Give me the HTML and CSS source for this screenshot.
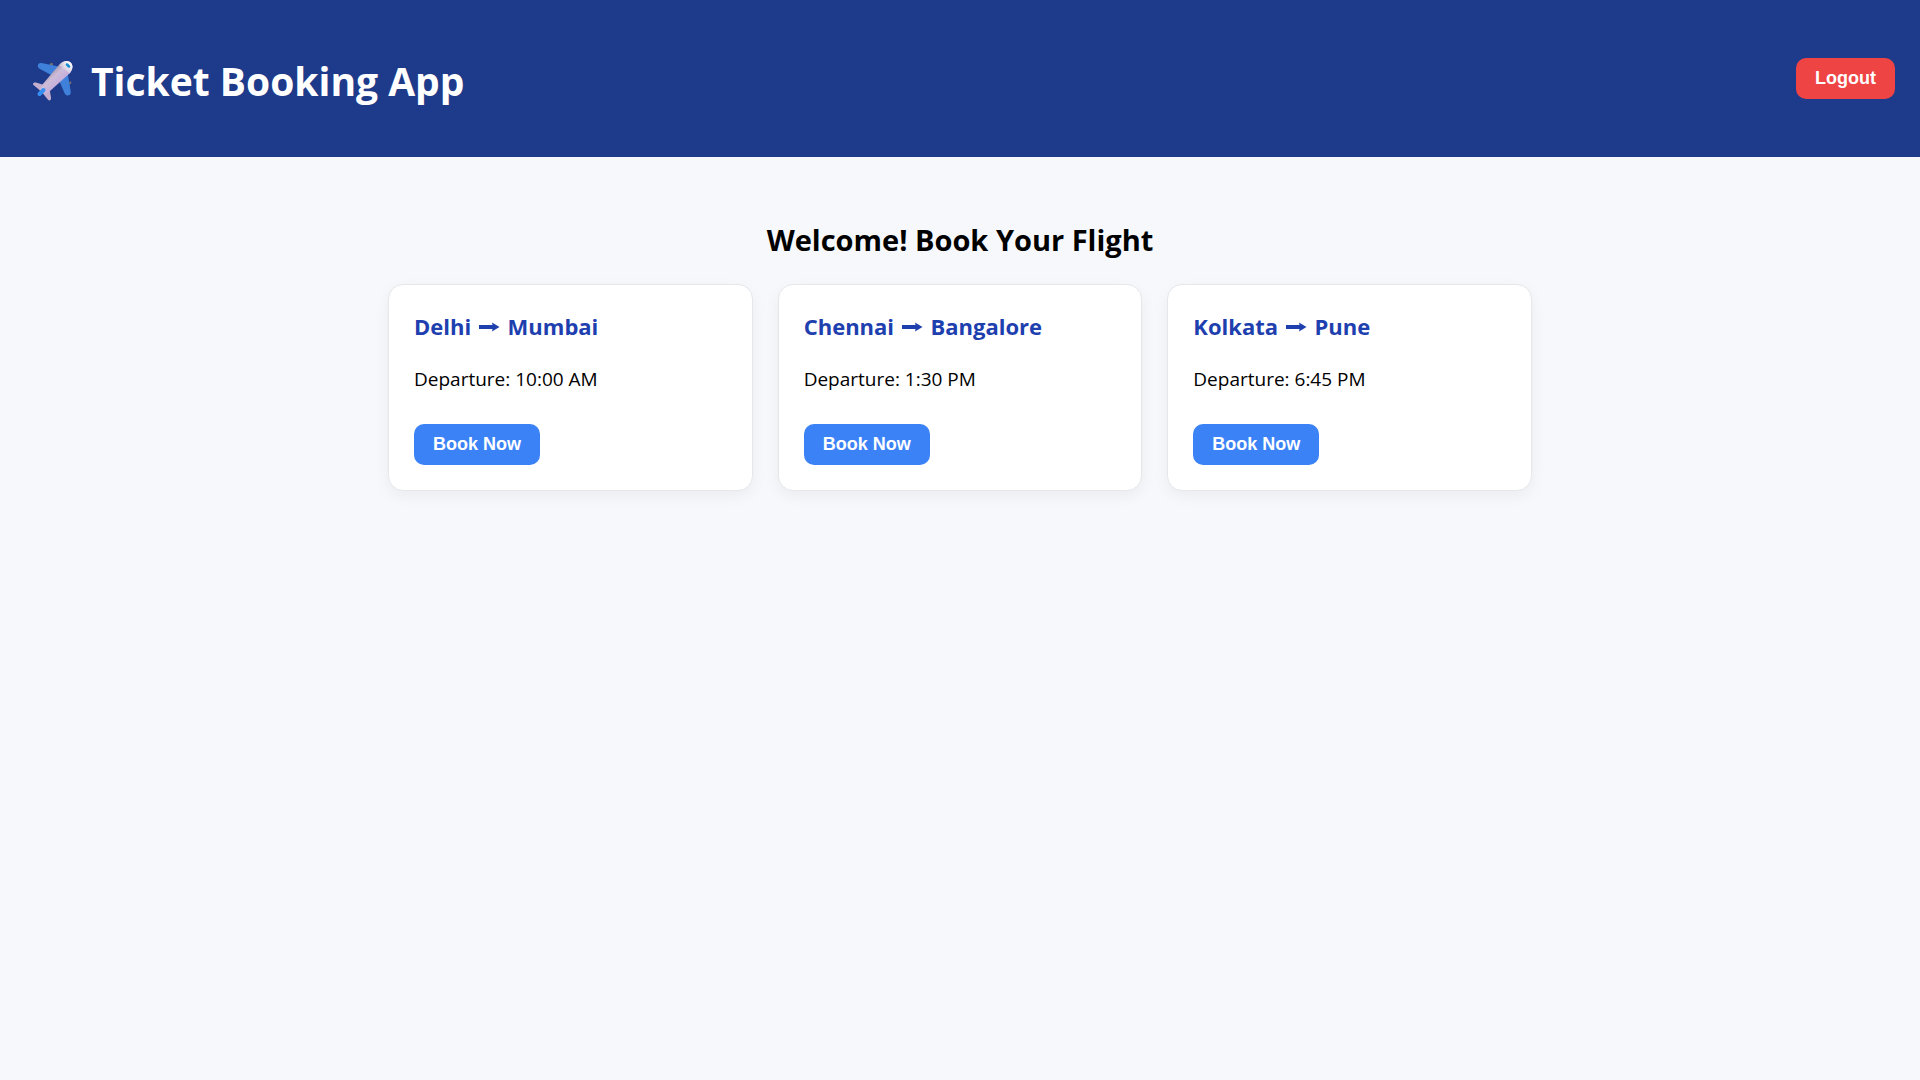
FILE: index.html
```html
<!DOCTYPE html>
<html lang="en">
<head>
  <meta charset="utf-8">
  <meta name="viewport" content="width=device-width, initial-scale=1">
  <title>Ticket Booking App</title>
  <link rel="stylesheet" href="styles.css">
</head>
<body>
  <svg class="sprite" aria-hidden="true">
    <symbol id="arrow" viewBox="0 0 21 10">
      <path d="M0 3H13.500L13 .5 20.500 5 13 9.500 13.500 7H0Z" fill="currentColor"/>
    </symbol>
  </svg>

  <header class="header">
    <h1 class="brand">
      <svg class="brand-icon" viewBox="0 0 40 40" aria-hidden="true">
        <defs>
          <linearGradient id="body" x1="14" y1="14" x2="24" y2="25" gradientUnits="userSpaceOnUse">
            <stop offset="0" stop-color="#a99bb0"/>
            <stop offset=".4" stop-color="#cdbcd9"/>
            <stop offset="1" stop-color="#c3addb"/>
          </linearGradient>
          <linearGradient id="nose" x1="28" y1="12" x2="36" y2="3" gradientUnits="userSpaceOnUse">
            <stop offset="0" stop-color="#e4e0e8" stop-opacity="0"/>
            <stop offset="1" stop-color="#f4f6f8"/>
          </linearGradient>
        </defs>
        <path d="M16.500 3.500 18 1.800 20 2.500 19.500 6ZM36 21.500l1.500-1.500L38.500 22l-2 2Z" fill="#77706f"/>
        <path d="M25.500 5.500 8.500 2C6.500 1.600 5 2.500 4.800 4.500 4.700 6.200 5.500 7.200 7 8L20 15Z" fill="#3f80db"/>
        <path d="M34.500 11 37.700 30.500C38 33.500 36.500 34.500 34.500 34.500 33 34.500 32.300 33.700 31.500 32L25 17Z" fill="#3f80db"/>
        <path d="M11 24 3 21.600C.5 21.200-1 22.800.8 24.300L7 29.500ZM16.500 28 18 36.500C18.300 39.300 16.500 40.500 15 38.800L10 32.500Z" fill="#c4aed0"/>
        <path d="M6.500 29 9 24 26 4C30-.7 35.500-1.200 38.200 2 40.500 5 39.500 9 36.500 12.500L17 30 11.500 33.500Z" fill="url(#body)"/>
        <path d="M26 4C30-.7 35.500-1.200 38.200 2 40.500 5 39.500 9 36.500 12.500Z" fill="url(#nose)"/>
        <path d="M34 3.500 36 5.500" stroke="#168bd0" stroke-width="2.500" stroke-linecap="round"/>
        <path d="M6.500 33 10.500 29" stroke="#368ff0" stroke-width="4" stroke-linecap="round"/>
      </svg>
      Ticket Booking App
    </h1>
    <button class="btn btn-logout" type="button">Logout</button>
  </header>

  <main class="main">
    <h2 class="welcome">Welcome! Book Your Flight</h2>
    <div class="flights">
      <article class="card">
        <h3 class="route">Delhi <svg class="arrow" role="img" aria-label="to"><use href="#arrow"/></svg> Mumbai</h3>
        <p class="departure">Departure: 10:00 AM</p>
        <button class="btn btn-book" type="button">Book Now</button>
      </article>
      <article class="card">
        <h3 class="route">Chennai <svg class="arrow" role="img" aria-label="to"><use href="#arrow"/></svg> Bangalore</h3>
        <p class="departure">Departure: 1:30 PM</p>
        <button class="btn btn-book" type="button">Book Now</button>
      </article>
      <article class="card">
        <h3 class="route">Kolkata <svg class="arrow" role="img" aria-label="to"><use href="#arrow"/></svg> Pune</h3>
        <p class="departure">Departure: 6:45 PM</p>
        <button class="btn btn-book" type="button">Book Now</button>
      </article>
    </div>
  </main>
</body>
</html>
```
FILE: styles.css
```css
* {
  box-sizing: border-box;
}

body {
  margin: 0;
  background: #f6f8fc;
  color: #000;
  font-family: "Segoe UI", "Open Sans", "Noto Sans", sans-serif;
}

.sprite {
  display: none;
}

.header {
  display: flex;
  justify-content: space-between;
  align-items: center;
  padding: 50px 25px;
  background: #1e3a8a;
  color: #fff;
}

.brand {
  display: flex;
  align-items: center;
  gap: 18px;
  margin: 0;
  padding: 4px 0 0 8px;
  font-size: 39px;
  line-height: 53px;
}

.brand-icon {
  width: 40px;
  height: 40px;
  overflow: visible;
}

.btn {
  padding: 10px 19px;
  border: 0;
  border-radius: 10px;
  color: #fff;
  font-family: Arial, "Liberation Sans", sans-serif;
  font-size: 18px;
  font-weight: 700;
  line-height: 21px;
  cursor: pointer;
}

.btn-logout {
  background: #ef4444;
}

.btn-book {
  background: #3b82f6;
}

.main {
  max-width: 1194px;
  margin: 0 auto;
  padding: 63px 25px;
}

.welcome {
  margin: 0 0 24px;
  font-size: 29px;
  line-height: 40px;
  text-align: center;
}

.flights {
  display: grid;
  grid-template-columns: repeat(auto-fit, minmax(280px, 1fr));
  gap: 25px;
}

.card {
  padding: 26px 25px 25px;
  border: 1px solid #e5e7eb;
  border-radius: 15px;
  background: #fff;
  box-shadow: 0 5px 15px rgba(0, 0, 0, 0.05);
}

.route {
  margin: 0 0 24px;
  color: #1e40af;
  font-size: 22px;
  line-height: 31px;
}

.arrow {
  width: 21px;
  height: 10px;
  margin: 0 2px;
  vertical-align: 3px;
}

.departure {
  margin: 0 0 31px;
  font-size: 19px;
  line-height: 27px;
}
```
